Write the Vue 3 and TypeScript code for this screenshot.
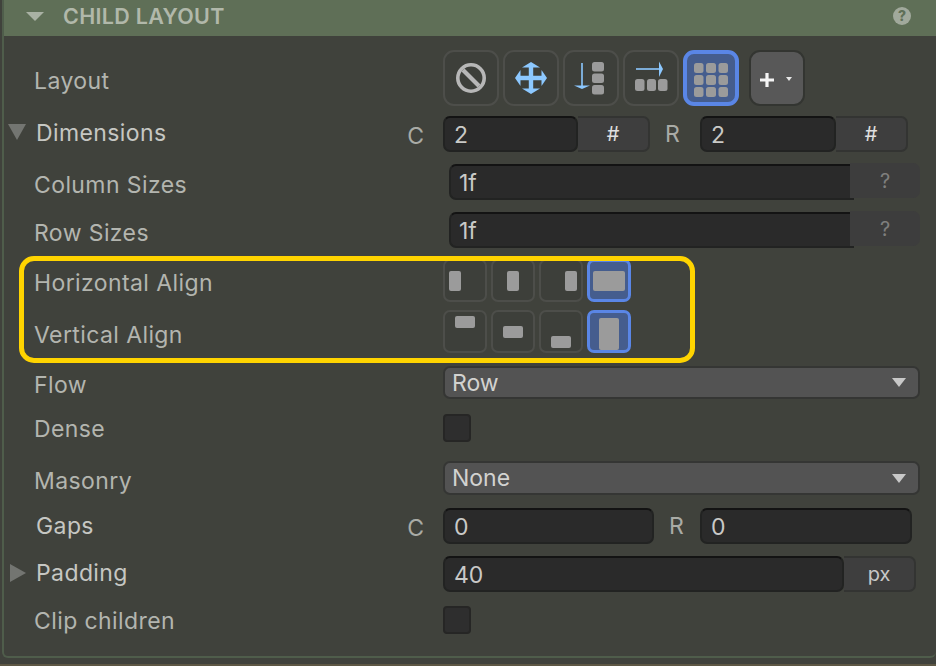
<script setup lang="ts">
const hAlign = [
  { cls: 'h-start', on: false },
  { cls: 'h-center', on: false },
  { cls: 'h-end', on: false },
  { cls: 'h-stretch', on: true },
]
const vAlign = [
  { cls: 'v-start', on: false },
  { cls: 'v-center', on: false },
  { cls: 'v-end', on: false },
  { cls: 'v-stretch', on: true },
]
</script>

<template>
  <div class="page">
    <section class="panel">
      <header class="head">
        <svg class="head-tri" width="18" height="9" viewBox="0 0 18 9"><path d="M0 0H18L9 9Z" /></svg>
        <span class="head-title">CHILD LAYOUT</span>
        <span class="help">?</span>
      </header>

      <div class="row r-layout">
        <div class="side"><span class="label lift">Layout</span></div>
        <div class="tiles">
          <div class="tile">
            <svg width="40" height="40" viewBox="0 0 40 40"><circle cx="20" cy="20" r="13.2" fill="none" stroke="#b7b7b7" stroke-width="3.6" /><path d="M12 12L28 28" stroke="#b7b7b7" stroke-width="4.2" /></svg>
          </div>
          <div class="tile">
            <svg width="40" height="40" viewBox="0 0 40 40" fill="#8cc8ff"><path d="M17.8 8H22.2V17.8H32V22.2H22.2V32H17.8V22.2H8V17.8H17.8Z" /><path d="M4 20L9.5 12V28Z M36 20L30.5 12V28Z M20 4L11 9.5H29Z M20 36L11 30.5H29Z" /></svg>
          </div>
          <div class="tile">
            <svg width="40" height="40" viewBox="0 0 40 40"><path d="M10.2 5H11.8V28H10.2Z" fill="#8cc8ff" /><path d="M3 27.5H19L11 31Z" fill="#8cc8ff" /><g fill="#9b9b9b"><rect x="21" y="4" width="12" height="9.5" rx="2.5" /><rect x="21" y="15.5" width="12" height="9.5" rx="2.5" /><rect x="21" y="27" width="12" height="9.5" rx="2.5" /></g></svg>
          </div>
          <div class="tile">
            <svg width="40" height="40" viewBox="0 0 40 40"><path d="M5 10.2H29V11.8H5Z" fill="#8cc8ff" /><path d="M28 3.5V19L32 11Z" fill="#8cc8ff" /><g fill="#9b9b9b"><rect x="4" y="21" width="9.5" height="12" rx="2.5" /><rect x="16" y="21" width="9" height="12" rx="2.5" /><rect x="27" y="21" width="9.5" height="12" rx="2.5" /></g></svg>
          </div>
          <div class="tile on">
            <svg width="40" height="40" viewBox="0 0 40 40" fill="#9b9b9b">
              <rect x="3" y="5" width="9.5" height="10" rx="2.5" /><rect x="15" y="5" width="10" height="10" rx="2.5" /><rect x="27.5" y="5" width="9.5" height="10" rx="2.5" />
              <rect x="3" y="17" width="9.5" height="10" rx="2.5" /><rect x="15" y="17" width="10" height="10" rx="2.5" /><rect x="27.5" y="17" width="9.5" height="10" rx="2.5" />
              <rect x="3" y="29" width="9.5" height="10" rx="2.5" /><rect x="15" y="29" width="10" height="10" rx="2.5" /><rect x="27.5" y="29" width="9.5" height="10" rx="2.5" />
            </svg>
          </div>
          <div class="tile add">
            <svg width="40" height="40" viewBox="0 0 40 40"><path d="M8.4 15H11.6V20.4H17V23.6H11.6V29H8.4V23.6H3V20.4H8.4Z" fill="#f4f4f4" /><path d="M29 19H35L32 23Z" fill="#e8e8e8" /></svg>
          </div>
        </div>
      </div>

      <div class="row r-dim">
        <div class="side">
          <svg class="tri" width="18" height="16" viewBox="0 0 18 16"><path d="M0 0H18L9 16Z" /></svg>
          <span class="label strong">Dimensions</span>
          <span class="axis-c">C</span>
        </div>
        <span class="field w-135">2</span><span class="unit w-72">#</span>
        <span class="axis-r">R</span>
        <span class="field w-136">2</span><span class="unit w-72">#</span>
      </div>

      <div class="row r-size">
        <div class="side"><span class="label">Column Sizes</span></div>
        <div class="track"><span class="field wide">1f</span><span class="hint">?</span></div>
      </div>

      <div class="row r-size">
        <div class="side"><span class="label">Row Sizes</span></div>
        <div class="track"><span class="field wide">1f</span><span class="hint">?</span></div>
      </div>

      <div class="row r-halign">
        <div class="side"><span class="label">Horizontal Align</span></div>
        <div class="aligns">
          <div v-for="item in hAlign" :key="item.cls" class="align" :class="[item.cls, { on: item.on }]"><i /></div>
        </div>
      </div>

      <div class="row r-valign">
        <div class="side"><span class="label">Vertical Align</span></div>
        <div class="aligns">
          <div v-for="item in vAlign" :key="item.cls" class="align" :class="[item.cls, { on: item.on }]"><i /></div>
        </div>
      </div>

      <div class="row r-flow">
        <div class="side"><span class="label">Flow</span></div>
        <div class="select"><span>Row</span><svg width="14" height="9" viewBox="0 0 14 9"><path d="M0 0H14L7 9Z" /></svg></div>
      </div>

      <div class="row r-dense">
        <div class="side"><span class="label">Dense</span></div>
        <div class="check" />
      </div>

      <div class="row r-mason">
        <div class="side"><span class="label">Masonry</span></div>
        <div class="select"><span>None</span><svg width="14" height="9" viewBox="0 0 14 9"><path d="M0 0H14L7 9Z" /></svg></div>
      </div>

      <div class="row r-gaps">
        <div class="side indent"><span class="label strong">Gaps</span><span class="axis-c">C</span></div>
        <span class="field w-211 solo">0</span>
        <span class="axis-r narrow">R</span>
        <span class="field w-212 solo">0</span>
      </div>

      <div class="row r-pad">
        <div class="side">
          <svg class="tri side-tri" width="16" height="18" viewBox="0 0 16 18"><path d="M0 0L16 9L0 18Z" /></svg>
          <span class="label strong">Padding</span>
        </div>
        <span class="field w-401">40</span><span class="unit w-72 small">px</span>
      </div>

      <div class="row r-clip">
        <div class="side"><span class="label">Clip children</span></div>
        <div class="check" />
      </div>
    </section>

    <div class="callout" />
  </div>
</template>

<style scoped>
.page {
  position: relative;
  width: 936px;
  height: 666px;
  overflow: hidden;
  background: #40423c;
  font-family: Inter, "Liberation Sans", sans-serif;
  border-bottom: 2px solid #5d5744;
  box-sizing: border-box;
}
.panel {
  box-sizing: border-box;
  margin-left: 2px;
  height: 658px;
  background: #40423c;
  border-left: 2px solid #4f5d4b;
  border-bottom: 2px solid #4f5d4b;
  border-radius: 0 0 6px 6px;
}
.head {
  box-sizing: border-box;
  display: flex;
  align-items: center;
  height: 36px;
  padding-bottom: 4px;
  background: #5f6f57;
  padding-left: 23px;
}
.head-tri { fill: #a9b1a4; margin-right: 18px; margin-left: -1px; }
.head-title {
  font-size: 21.5px;
  font-weight: 600;
  color: #b1b8aa;
  letter-spacing: 0.3px;
  margin-left: 1px;
}
.help {
  width: 18px;
  height: 18px;
  margin-left: auto;
  margin-right: 25px;
  border-radius: 50%;
  background: #a1a99c;
  color: #5f6f57;
  font-size: 14px;
  font-weight: 800;
  line-height: 18px;
  text-align: center;
}

.row { display: flex; align-items: center; }
.r-layout { height: 56px; margin-top: 14px; }
.r-dim { height: 36px; margin-top: 10px; }
.r-size { height: 36px; margin-top: 12px; }
.r-halign { height: 43px; margin-top: 11px; }
.r-valign { height: 43px; margin-top: 8px; }
.r-flow { height: 33px; margin-top: 13px; }
.r-dense { height: 28px; margin-top: 15px; }
.r-mason { height: 34px; margin-top: 19px; }
.r-gaps { height: 36px; margin-top: 13px; }
.r-pad { height: 36px; margin-top: 12px; }
.r-clip { height: 28px; margin-top: 14px; }

.side {
  box-sizing: border-box;
  flex: none;
  display: flex;
  align-items: center;
  width: 439px;
  padding-left: 30px;
  height: 100%;
}
.r-dim .side, .r-pad .side { padding-left: 4px; }
.side.indent { padding-left: 32px; }
.label {
  position: relative;
  top: 1px;
  font-size: 23px;
  line-height: 28px;
  letter-spacing: 0.4px;
  color: #b3b5af;
  white-space: nowrap;
}
.label.strong { color: #c6c7c3; top: -1px; }
.lift { top: 3px; }
.r-size .label, .r-valign .label, .r-mason .label { top: 3px; }
.r-halign .label, .r-flow .label { top: 2px; }
.r-gaps .label.strong { top: 0; }
.tri { fill: #737571; flex: none; margin-right: 10px; margin-top: -4px; }
.side-tri { margin-left: 2px; margin-right: 10px; margin-top: -2px; }
.axis-c {
  margin-left: auto;
  margin-right: 19px;
  font-size: 23px;
  color: #a9aba6;
  position: relative;
  top: 2px;
}
.axis-r {
  flex: none;
  box-sizing: border-box;
  width: 50px;
  padding-right: 5px;
  text-align: center;
  font-size: 23px;
  color: #a9aba6;
}
.axis-r.narrow { width: 46px; padding-right: 1px; }

.tiles { display: flex; gap: 4px; }
.tile {
  box-sizing: border-box;
  display: grid;
  place-items: center;
  width: 56px;
  height: 56px;
  border: 2px solid #4d4e4a;
  border-radius: 11px;
  background: #3d3f3a;
}
.tile svg { display: block; margin: -2px; }
.tile.on { border: 4px solid #5a86e6; background: #455d8e; }
.tile.on svg { margin: -4px; }
.tile.add { background: #585858; border-color: #333531; margin-left: 6px; }

.field, .unit {
  box-sizing: border-box;
  flex: none;
  height: 36px;
  display: flex;
  align-items: center;
  font-size: 23px;
}
.field {
  padding: 2px 0 0 9px;
  color: #c9c9c7;
  background: #2a2a2a;
  border: 2px solid #222322;
  border-top-color: #131313;
  border-radius: 7px;
}
.unit {
  justify-content: center;
  color: #e0e0e0;
  font-size: 20px;
  background: #3e3e3e;
  border: 2px solid #333432;
  border-left: none;
  border-radius: 0 7px 7px 0;
}
.unit.small { color: #c8c8c8; }
.w-135 { width: 135px; }
.w-136 { width: 136px; }
.w-211 { width: 211px; }
.w-212 { width: 212px; }
.w-401 { width: 401px; }
.w-72 { width: 72px; }

.track { display: flex; margin-left: 6px; }
.field.wide { width: 405px; padding-left: 8px; border-right: none; border-radius: 7px 0 0 7px; }
.hint {
  box-sizing: border-box;
  flex: none;
  width: 70px;
  height: 35px;
  margin-left: -4px;
  margin-top: -1px;
  display: grid;
  place-items: center;
  font-size: 20px;
  color: #7f7f7d;
  background: #3d3d3d;
  border-radius: 0 7px 7px 0;
  position: relative;
}

.aligns { display: flex; gap: 4px; }
.align {
  box-sizing: border-box;
  display: flex;
  width: 44px;
  height: 43px;
  border: 2px solid #4d4e4a;
  border-radius: 7px;
  background: #3d3f3a;
  padding: 4px;
}
.align.on { border: 3px solid #5a86e6; background: #455d8e; padding: 3px; }
.align i { display: block; background: #9b9b9b; border-radius: 2px; }
.r-halign .align { align-items: center; }
.r-halign .align i { width: 12px; height: 20px; }
.h-center { justify-content: center; }
.h-end { justify-content: flex-end; }
.r-halign .h-stretch i { width: 100%; }
.r-valign .align { justify-content: center; padding-bottom: 3px; }
.r-valign .align i { width: 20px; height: 12px; }
.v-center { align-items: center; }
.v-end { align-items: flex-end; }
.r-valign .v-stretch { padding-top: 5px; padding-bottom: 0; }
.r-valign .v-stretch i { height: 100%; }

.select {
  box-sizing: border-box;
  flex: none;
  width: 477px;
  height: 100%;
  display: flex;
  align-items: center;
  justify-content: space-between;
  padding: 0 12px 0 7px;
  font-size: 23px;
  color: #d2d2d0;
  background: #535353;
  border: 2px solid #353634;
  border-radius: 7px;
}
.select svg { fill: #c8c8c8; }
.check {
  box-sizing: border-box;
  width: 28px;
  height: 28px;
  background: #2e2e2e;
  border: 2px solid #262625;
  border-radius: 4px;
}

.callout {
  position: absolute;
  left: 19px;
  top: 256px;
  width: 676px;
  height: 107px;
  box-sizing: border-box;
  border: 5px solid #ffd400;
  border-radius: 15px;
  pointer-events: none;
}
</style>

<style>
html, body { margin: 0; background: #40423c; }
</style>
